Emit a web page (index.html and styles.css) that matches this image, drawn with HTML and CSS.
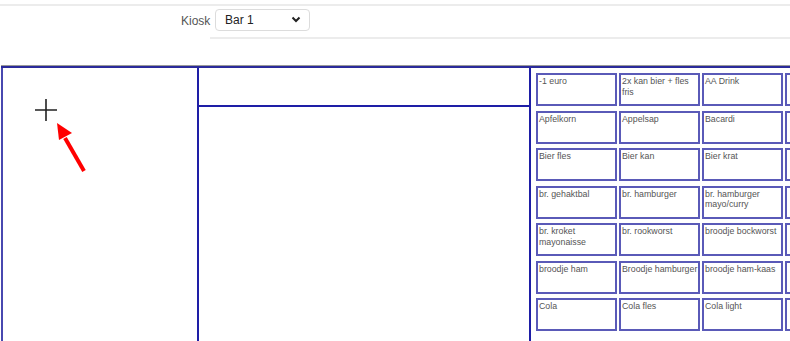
FILE: index.html
```html
<!DOCTYPE html>
<html>
<head>
<meta charset="utf-8">
<link rel="stylesheet" href="styles.css">
</head>
<body>
<div class="topbar">
  <div class="kiosk-row">
    <label class="kiosk-label">Kiosk</label>
    <div class="select">
      <span>Bar 1</span>
      <svg class="chev" width="10" height="7" viewBox="0 0 10 7"><path d="M1.5 1.5 L5 5 L8.5 1.5" fill="none" stroke="#222" stroke-width="2"/></svg>
    </div>
  </div>
</div>
<div class="main">
  <div class="col-left">
    <svg class="cross" width="24" height="24" viewBox="0 0 24 24"><path d="M12 1 V23 M1 12 H23" stroke="#222" stroke-width="1.6"/></svg>
    <svg class="arrow" width="40" height="60" viewBox="0 0 40 60"><path d="M31 55 L12 22" stroke="#ff0000" stroke-width="4"/><path d="M4 7 L19 17 L6 24 Z" fill="#ff0000"/></svg>
  </div>
  <div class="col-mid">
    <div class="mid-top"></div>
    <div class="mid-bottom"></div>
  </div>
  <div class="col-right">
    <div class="grid">
      <div class="cell">-1 euro</div><div class="cell">2x kan bier + fles fris</div><div class="cell">AA Drink</div><div class="cell"></div>
      <div class="cell">Apfelkorn</div><div class="cell">Appelsap</div><div class="cell">Bacardi</div><div class="cell"></div>
      <div class="cell">Bier fles</div><div class="cell">Bier kan</div><div class="cell">Bier krat</div><div class="cell"></div>
      <div class="cell">br. gehaktbal</div><div class="cell">br. hamburger</div><div class="cell">br. hamburger mayo/curry</div><div class="cell"></div>
      <div class="cell">br. kroket mayonaisse</div><div class="cell">br. rookworst</div><div class="cell">broodje bockworst</div><div class="cell"></div>
      <div class="cell">broodje ham</div><div class="cell">Broodje hamburger</div><div class="cell">broodje ham-kaas</div><div class="cell"></div>
      <div class="cell">Cola</div><div class="cell">Cola fles</div><div class="cell">Cola light</div><div class="cell"></div>
    </div>
  </div>
</div>
</body>
</html>
```
FILE: styles.css
```css
html, body {
  margin: 0;
  padding: 0;
  background: #fff;
  overflow: hidden;
  font-family: "Liberation Sans", Arial, sans-serif;
}
.topbar {
  margin-top: 4px;
  border-top: 2px solid #ececec;
  height: 31px;
  padding-left: 210px;
}
.kiosk-row {
  display: flex;
  align-items: center;
  height: 31px;
  border-bottom: 2px solid #ececec;
  position: relative;
}
.kiosk-label {
  font-size: 12px;
  color: #555;
  position: absolute;
  left: -29px;
  top: 8px;
}
.select {
  margin-left: 5px;
  margin-top: -4px;
  width: 95px;
  height: 22px;
  box-sizing: border-box;
  border: 1px solid #dcdcdc;
  border-radius: 4px;
  display: flex;
  align-items: center;
  justify-content: space-between;
  padding: 0 8px 0 9px;
  font-size: 12px;
  color: #222;
}
.main {
  margin-top: 29px;
  margin-left: 1px;
  display: flex;
  border-top: 2px solid #2a2a9a;
  box-shadow: 0 -1px 0 #999;
  height: 400px;
  width: 900px;
}
.col-left {
  width: 194px;
  border-left: 2px solid #4848b0;
  border-right: 2px solid #1e1ea6;
  position: relative;
}
.cross {
  position: absolute;
  left: 31px;
  top: 30px;
}
.arrow {
  position: absolute;
  left: 50px;
  top: 48px;
}
.col-mid {
  width: 330px;
  border-right: 2px solid #1e1ea6;
  display: flex;
  flex-direction: column;
}
.mid-top {
  height: 37px;
  border-bottom: 2px solid #1e1ea6;
}
.mid-bottom {
  flex: 1;
}
.col-right {
  padding: 5px 0 0 5px;
}
.grid {
  display: grid;
  grid-template-columns: repeat(4, 81px);
  grid-auto-rows: 33px;
  column-gap: 2px;
  row-gap: 4.5px;
}
.cell {
  box-sizing: border-box;
  border: 2px solid #5a5ab8;
  padding: 1px 0 0 1px;
  font-size: 8.8px;
  line-height: 10.5px;
  color: #555;
  overflow: hidden;
}
```
